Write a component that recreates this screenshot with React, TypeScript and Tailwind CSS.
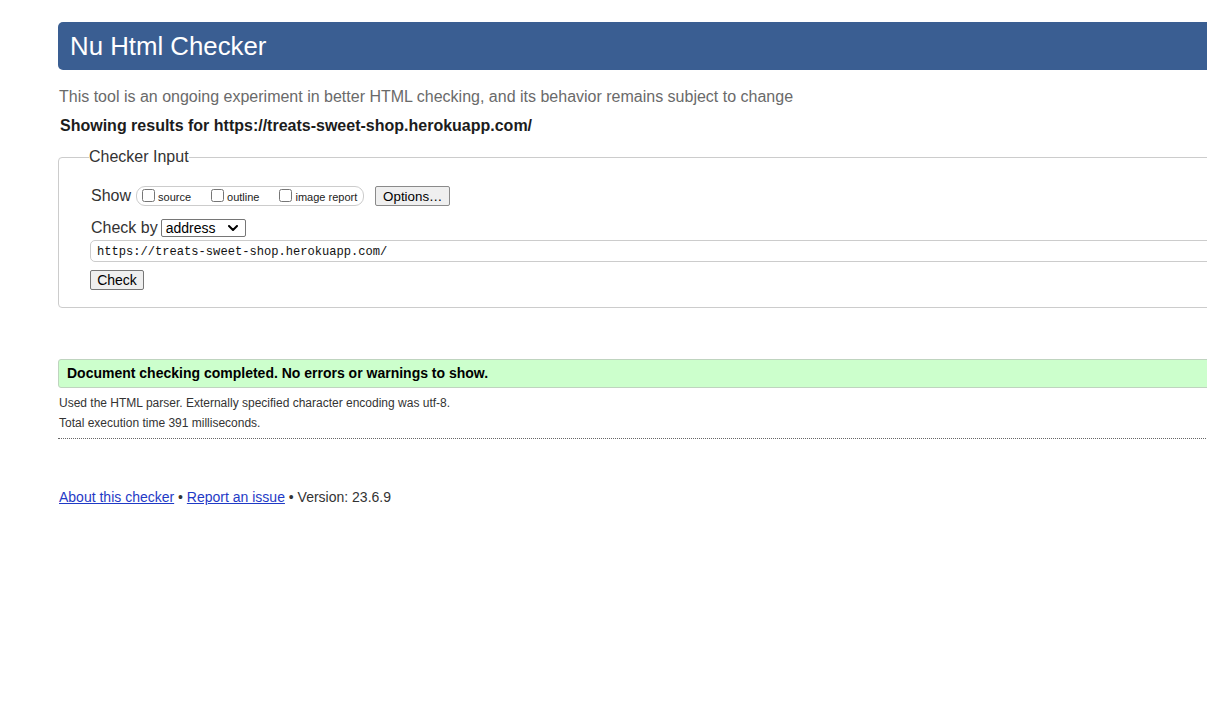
export default function App() {
  return (
    <div className="w-[1207px] h-[713px] overflow-hidden bg-white text-[#222] font-['Liberation_Sans',Arial,sans-serif]">
      <div className="ml-[58px] w-[1200px]">
        {/* Title bar */}
        <h1 className="mt-[22px] h-[48px] flex items-center pl-[12px] bg-[#3a5e92] text-white text-[25.8px] rounded-l-[5px]">
          Nu Html Checker
        </h1>

        <p className="mt-[18px] text-[16px] leading-[18px] text-[#6a6a6a] pl-px">
          This tool is an ongoing experiment in better HTML checking, and its behavior remains subject to change
        </p>
        <p className="mt-[11px] text-[16px] leading-[18px] font-bold text-[#1c1c1c] pl-[2px]">
          Showing results for https://treats-sweet-shop.herokuapp.com/
        </p>

        {/* Checker input */}
        <fieldset className="mt-[13px] border border-[#cccccc] rounded-[4px] pl-[31px] pb-[17px] text-[#333]">
          <legend className="ml-[-1px] text-[16px] leading-[18px] text-[#333]">Checker Input</legend>

          <div className="mt-[19px] h-[21px] flex items-center">
            <span className="text-[16px] leading-[18px] ml-px">Show</span>
            <div className="ml-[5px] h-[20px] flex items-center border border-[#cccccc] rounded-[9px] pl-[5px] pr-[6px]">
              <label className="flex items-center text-[11px] text-[#222]">
                <input type="checkbox" className="w-[13px] h-[13px] m-0" />
                <span className="ml-[3px] mt-[3px]">source</span>
              </label>
              <label className="ml-[20px] flex items-center text-[11px] text-[#222]">
                <input type="checkbox" className="w-[13px] h-[13px] m-0" />
                <span className="ml-[3px] mt-[3px]">outline</span>
              </label>
              <label className="ml-[20px] flex items-center text-[11px] text-[#222]">
                <input type="checkbox" className="w-[13px] h-[13px] m-0" />
                <span className="ml-[3px] mt-[3px]">image report</span>
              </label>
            </div>
            <button className="ml-[11px] h-[20px] w-[75px] bg-[#efefef] border border-[#8a8a8a] rounded-[2px] text-[13.33px] text-black">
              Options…
            </button>
          </div>

          <div className="mt-[13px] h-[18px] flex items-center">
            <span className="text-[16px] leading-[18px] ml-px">Check by</span>
            <div className="ml-[3px] h-[18px] w-[85px] flex items-center justify-between border border-[#767676] rounded-[2px] pl-[4px] pr-[7px] text-[14px] leading-[16px] text-black bg-white">
              <span>address</span>
              <svg viewBox="0 0 10 6" className="w-[10px] h-[6px]">
                <polyline
                  points="1,1 5,5 9,1"
                  fill="none"
                  stroke="#000"
                  strokeWidth="2"
                  strokeLinecap="round"
                  strokeLinejoin="round"
                />
              </svg>
            </div>
          </div>

          <div className="mt-[3px] h-[22px] flex items-center pt-[2px] border border-[#cccccc] rounded-[5px] pl-[6px] font-['Liberation_Mono',monospace] text-[12.1px] text-[#111]">
            https://treats-sweet-shop.herokuapp.com/
          </div>

          <button className="mt-[8px] h-[20px] w-[54px] bg-[#efefef] border border-[#767676] rounded-[2px] text-[14px] text-black flex items-center justify-center">
            Check
          </button>
        </fieldset>

        {/* Result */}
        <div className="mt-[51px] h-[29px] flex items-center pl-[8px] bg-[#ccffcc] border border-[#bfd4bf] rounded-l-[3px] text-[14px] font-bold text-black">
          Document checking completed. No errors or warnings to show.
        </div>
        <div className="mt-[5px] border-b border-dotted border-[#666] pb-[5px] text-[12px] leading-[20px] text-[#333] pl-px">
          <p>Used the HTML parser. Externally specified character encoding was utf-8.</p>
          <p>Total execution time 391 milliseconds.</p>
        </div>

        {/* Footer */}
        <p className="mt-[49px] text-[14px] leading-[18px] text-[#333] pl-px">
          <a href="#" className="text-[#1f3ac6] underline">About this checker</a>
          {" • "}
          <a href="#" className="text-[#1f3ac6] underline">Report an issue</a>
          {" • Version: 23.6.9"}
        </p>
      </div>
    </div>
  );
}
